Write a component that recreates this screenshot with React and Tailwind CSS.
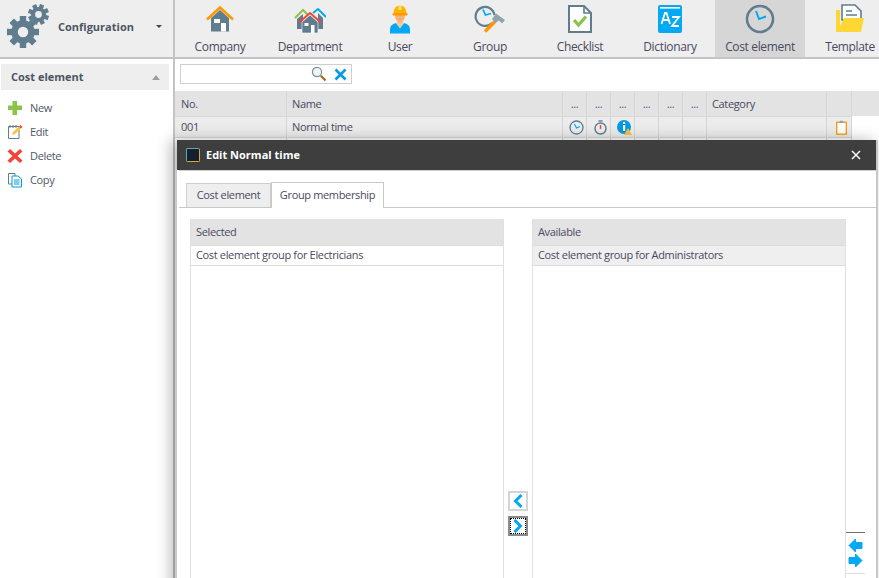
import React from 'react';

const nav = [
  { label: 'Company', icon: <CompanyIcon /> },
  { label: 'Department', icon: <DepartmentIcon /> },
  { label: 'User', icon: <UserIcon /> },
  { label: 'Group', icon: <GroupIcon /> },
  { label: 'Checklist', icon: <ChecklistIcon /> },
  { label: 'Dictionary', icon: <DictionaryIcon /> },
  { label: 'Cost element', icon: <ClockIcon />, active: true },
  { label: 'Template', icon: <TemplateIcon /> },
];

const actions = [
  { label: 'New', icon: <PlusIcon /> },
  { label: 'Edit', icon: <EditIcon /> },
  { label: 'Delete', icon: <DeleteIcon /> },
  { label: 'Copy', icon: <CopyIcon /> },
];

function CompanyIcon() {
  return (
    <svg width="30" height="30" viewBox="0 0 30 30">
      <path d="M6 14 L15 6 L24 14 V27.5 H6 Z" fill="#5f7d8e" />
      <path d="M2 15.5 L15 3.5 L28 15.5" fill="none" stroke="#ff9800" strokeWidth="2.6" />
      <rect x="9" y="15" width="6" height="4" fill="#fff" />
      <rect x="16" y="19" width="5" height="8.5" fill="#fff" />
    </svg>
  );
}

function DepartmentIcon() {
  return (
    <svg width="32" height="30" viewBox="0 0 32 30">
      <path d="M1 14 L9 6 L14 11" fill="none" stroke="#8bc34a" strokeWidth="2" />
      <path d="M19 9 L24 5 L32 13" fill="none" stroke="#03a9f4" strokeWidth="2" />
      <path d="M3 15 L9 10 V25 H3 Z" fill="#5f7d8e" />
      <path d="M24 9 L29 14 V25 H24 Z" fill="#5f7d8e" />
      <path d="M8 18 L16 11 L24 18 V29 H8 Z" fill="#5f7d8e" stroke="#fff" strokeWidth="0.6" />
      <path d="M5 18.5 L16 9 L27 18.5" fill="none" stroke="#f44336" strokeWidth="2" />
      <rect x="10.5" y="19" width="4" height="3" fill="#fff" />
      <rect x="17" y="21" width="3.5" height="8" fill="#fff" />
    </svg>
  );
}

function UserIcon() {
  return (
    <svg width="24" height="30" viewBox="0 0 24 30">
      <path d="M2 29.5 V25 Q2 20.5 8 19 L12 24 L16 19 Q22 20.5 22 25 V29.5 Z" fill="#03a9f4" />
      <path d="M8 19 L12 24.5 L16 19 L14 17 H10 Z" fill="#f2c79b" />
      <path d="M7 11 H17 Q17 17 12 18.5 Q7 17 7 11 Z" fill="#f2b27a" />
      <path d="M5.5 10 Q5.5 1.5 12 1.5 Q18.5 1.5 18.5 10 Z" fill="#ffb300" />
      <rect x="4.5" y="9" width="15" height="2.4" rx="1" fill="#ff9800" />
      <rect x="10.5" y="1" width="3" height="5" fill="#ffe082" />
    </svg>
  );
}

function GroupIcon() {
  return (
    <svg width="32" height="30" viewBox="0 0 32 30">
      <path d="M18 19 A9.5 9.5 0 1 1 20.5 11" fill="none" stroke="#5f7d8e" strokeWidth="2.2" />
      <path d="M9 5.5 L11.5 11 L17 9.5" fill="none" stroke="#03a9f4" strokeWidth="1.8" />
      <path d="M11 27.5 L21 17.5" stroke="#ff9800" strokeWidth="3.6" />
      <path d="M18 15 L22 9.5 L31 16 L28 19.5 L25 16.5 L21.5 19 Z" fill="#90a4ae" />
    </svg>
  );
}

function ChecklistIcon() {
  return (
    <svg width="26" height="30" viewBox="0 0 26 30">
      <path d="M2 2 H17 L24 9 V28 H2 Z" fill="#fff" stroke="#5f7d8e" strokeWidth="2" />
      <path d="M17 2 V9 H24" fill="none" stroke="#5f7d8e" strokeWidth="1.6" />
      <path d="M7 16 L11.5 21 L19 12.5" fill="none" stroke="#8bc34a" strokeWidth="3.2" />
    </svg>
  );
}

function DictionaryIcon() {
  return (
    <svg width="24" height="28" viewBox="0 0 24 28">
      <rect x="0" y="0" width="24" height="28" rx="2" fill="#03a9f4" />
      <rect x="2" y="2" width="20" height="1.6" fill="#fff" />
      <path d="M3.5 19 L7 8 H8.5 L12 19 M5 15 H10.5" fill="none" stroke="#fff" strokeWidth="1.8" />
      <path d="M14 12 H21 L14 21 H21" fill="none" stroke="#fff" strokeWidth="1.8" />
    </svg>
  );
}

function ClockIcon() {
  return (
    <svg width="30" height="30" viewBox="0 0 30 30">
      <circle cx="15" cy="15" r="13" fill="none" stroke="#5f7d8e" strokeWidth="2.6" />
      <path d="M11 7 L14 15 L21 12.5" fill="none" stroke="#03a9f4" strokeWidth="2" />
    </svg>
  );
}

function TemplateIcon() {
  return (
    <svg width="30" height="30" viewBox="0 0 30 30">
      <path d="M1 6 H5 V28 H1 Z" fill="#fdd835" />
      <path d="M7 1 H20 L26 7 V16 H7 Z" fill="#fff" stroke="#5f7d8e" strokeWidth="1.6" />
      <path d="M11 7 H17 M11 11 H22" stroke="#5f7d8e" strokeWidth="1.6" />
      <path d="M9 14 H29 L26 28 H2 Z" fill="#fdd835" />
    </svg>
  );
}

function GearsIcon() {
  const cogA = Array.from({ length: 8 }, (_, i) => i * 45);
  const cogB = Array.from({ length: 8 }, (_, i) => i * 45 + 20);
  return (
    <svg className="-mt-[3px]" width="44" height="46" viewBox="0 0 44 46">
      <g transform="translate(16 28)">
        {cogA.map(a => <rect key={a} x="-3.2" y="-16" width="6.4" height="6" fill="#5f7d8e" transform={`rotate(${a})`} />)}
        <circle r="8.5" fill="none" stroke="#5f7d8e" strokeWidth="6.5" />
      </g>
      <g transform="translate(31.5 10.5)">
        {cogB.map(a => <rect key={a} x="-2.2" y="-10.5" width="4.4" height="4" fill="#5f7d8e" transform={`rotate(${a})`} />)}
        <circle r="5.5" fill="none" stroke="#5f7d8e" strokeWidth="4.2" />
      </g>
    </svg>
  );
}

function PlusIcon() {
  return (
    <svg width="16" height="16" viewBox="0 0 16 16">
      <path d="M5.5 1 H10 V5.5 H15 V10 H10 V15 H5.5 V10 H1 V5.5 H5.5 Z" fill="#8bc34a" />
    </svg>
  );
}

function EditIcon() {
  return (
    <svg width="16" height="16" viewBox="0 0 16 16">
      <path d="M1.5 2.5 H12 V14.5 H1.5 Z" fill="#fff" stroke="#5f7d8e" strokeWidth="1" />
      <path d="M3 1 V4 M6 1 V4 M9 1 V4" stroke="#5f7d8e" strokeWidth="1" />
      <path d="M5 11 L6 8 L12 2.5 L14 4.5 L8 10 Z" fill="#fdc13a" />
      <path d="M12 2.5 L13.5 1 L15.5 3 L14 4.5 Z" fill="#f44336" />
    </svg>
  );
}

function DeleteIcon() {
  return (
    <svg width="16" height="16" viewBox="0 0 16 16">
      <path d="M3 1 L8 5.5 L13 1 L15.5 3.5 L10.5 8 L15.5 12.5 L13 15 L8 10.5 L3 15 L0.5 12.5 L5.5 8 L0.5 3.5 Z" fill="#f44336" />
    </svg>
  );
}

function CopyIcon() {
  return (
    <svg width="16" height="16" viewBox="0 0 16 16">
      <path d="M1.5 1.5 H8 V12 H1.5 Z" fill="#fff" stroke="#5f7d8e" strokeWidth="1" />
      <path d="M5 4 H11 L14.5 7 V15 H5 Z" fill="#fff" stroke="#039be5" strokeWidth="1" />
      <path d="M7 8 H12.5 M7 10 H12.5 M7 12 H12.5" stroke="#039be5" strokeWidth="1" />
    </svg>
  );
}

function SmallClock() {
  return (
    <svg width="15" height="15" viewBox="0 0 15 15">
      <circle cx="7.5" cy="7.5" r="6.5" fill="none" stroke="#5f7d8e" strokeWidth="1.3" />
      <path d="M5.5 4 L7.5 8 L11 6.5" fill="none" stroke="#03a9f4" strokeWidth="1.1" />
    </svg>
  );
}

function Stopwatch() {
  return (
    <svg width="15" height="15" viewBox="0 0 15 15">
      <circle cx="7.5" cy="8.5" r="5.5" fill="none" stroke="#5f7d8e" strokeWidth="1.4" />
      <path d="M5.5 1 H9.5" stroke="#5f7d8e" strokeWidth="1.4" />
      <path d="M7.5 5 V9" stroke="#f44336" strokeWidth="1.4" />
    </svg>
  );
}

function InfoWarn() {
  return (
    <svg width="15" height="15" viewBox="0 0 15 15">
      <circle cx="7" cy="7" r="7" fill="#039be5" />
      <rect x="6" y="2" width="2.2" height="2" fill="#fff" />
      <rect x="6" y="5" width="2.2" height="6" fill="#fff" />
      <path d="M11 8 L15 15 H7 Z" fill="#fdc13a" />
    </svg>
  );
}

function Clipboard() {
  return (
    <svg width="11" height="15" viewBox="0 0 11 15">
      <rect x="0.7" y="2.2" width="9.6" height="12" fill="#fff" stroke="#ff9800" strokeWidth="1.3" />
      <path d="M3 3 L4 0.8 H7 L8 3 Z" fill="#90a4ae" />
    </svg>
  );
}

function ChevronBtn({ dir, focused }) {
  return (
    <button className={`w-5 h-5 flex items-center justify-center bg-white border-2 ${focused ? 'border-[#8a8a8a] outline-1 outline-dotted outline-black -outline-offset-3' : 'border-[#d4d4d4]'}`}>
      <svg width="10" height="14" viewBox="0 0 10 14">
        <path d={dir === 'left' ? 'M8.5 1 L2.5 7 L8.5 13' : 'M1.5 1 L7.5 7 L1.5 13'} fill="none" stroke="#03a9f4" strokeWidth="3" />
      </svg>
    </button>
  );
}

function ListPanel({ title, item, tinted }) {
  return (
    <div className="w-[314px] flex flex-col border-x border-[#e0e0e0] min-h-0 h-full">
      <div className="h-[26px] shrink-0 bg-[#e3e3e3] px-[5px] pb-[2px] flex items-center">{title}</div>
      <div className={`h-[21px] shrink-0 px-[5px] pb-[2px] flex items-center border-y border-[#dcdcdc] ${tinted ? 'bg-[#efefef]' : 'bg-white'}`}>{item}</div>
    </div>
  );
}

function Cell({ className, children }) {
  return <div className={`h-full flex items-center border-r border-[#d6d6d6] ${className}`}>{children}</div>;
}

const dotCols = [0, 1, 2, 3, 4, 5];
const rowIcons = [<SmallClock />, <Stopwatch />, <InfoWarn />, null, null, null];

export default function App() {
  return (
    <div className="w-[879px] h-[578px] overflow-hidden bg-white flex flex-col text-[11px] leading-none tracking-[-0.35px] text-[#4a4a5e] font-['Open_Sans','Noto_Sans',sans-serif]">
      {/* top bar */}
      <div className="h-[59px] shrink-0 flex bg-[#eeeeee] border-b-2 border-[#c4c4c4]">
        <div className="w-[175px] shrink-0 flex items-center border-r-2 border-[#c4c4c4] pl-[7px]">
          <GearsIcon />
          <span className="ml-[7px] pb-[4px] font-bold tracking-normal text-[#4b5563]">Configuration</span>
          <span className="ml-[22px] mb-[4px] w-0 h-0 border-x-[3px] border-x-transparent border-t-[3px] border-t-[#444]" />
        </div>
        <div className="flex-1 flex overflow-hidden">
          {nav.map(n => (
            <div key={n.label} className={`w-[90px] shrink-0 flex flex-col items-center ${n.active ? 'bg-[#d6d6d6]' : ''}`}>
              <div className="h-[36px] mt-[1px] flex items-center justify-center">{n.icon}</div>
              <span className="mt-[4px] text-[12px] whitespace-nowrap">{n.label}</span>
            </div>
          ))}
        </div>
      </div>

      <div className="flex-1 flex min-h-0">
        {/* sidebar */}
        <div className="w-[175px] shrink-0 border-r-2 border-[#c4c4c4] pl-px pr-[4px] pt-[5px]">
          <div className="h-[26px] bg-[#eeeeee] flex items-center justify-between pl-[10px] pr-[9px]">
            <span className="pb-[2px] font-bold tracking-normal text-[#4b5563]">Cost element</span>
            <span className="w-0 h-0 border-x-4 border-x-transparent border-b-[5px] border-b-[#9e9e9e]" />
          </div>
          <div className="mt-[6px] flex flex-col">
            {actions.map(a => (
              <div key={a.label} className="h-6 flex items-center pl-[6px] gap-[7px]">
                {a.icon}
                <span className="pb-[2px] text-[#50566b]">{a.label}</span>
              </div>
            ))}
          </div>
        </div>

        {/* content */}
        <div className="flex-1 relative min-w-0">
          <div className="h-[32px] flex items-start pt-[5px] pl-[5px]">
            <div className="w-[172px] h-[20px] border border-[#cfcfcf] bg-white flex items-center justify-end pr-1 gap-[7px]">
              <svg width="16" height="16" viewBox="0 0 16 16">
                <circle cx="6" cy="6" r="4.6" fill="#eef6fa" stroke="#78909c" strokeWidth="1.2" />
                <path d="M9.8 9.8 L14.5 14.5" stroke="#b0651e" strokeWidth="2.2" />
              </svg>
              <svg width="13" height="13" viewBox="0 0 13 13">
                <path d="M1.5 1.5 L11.5 11.5 M11.5 1.5 L1.5 11.5" stroke="#039be5" strokeWidth="2.6" />
              </svg>
            </div>
          </div>
          <div className="flex flex-col">
            <div className="h-[25px] bg-[#e3e3e3] flex">
              <Cell className="w-[112px] pl-[6px] pb-[1px]">No.</Cell>
              <Cell className="w-[276px] pl-[5px] pb-[1px]">Name</Cell>
              {dotCols.map(i => (
                <Cell key={i} className="w-6 justify-center text-[#7b3f98]">...</Cell>
              ))}
              <Cell className="w-[120px] pl-[5px] pb-[1px]">Category</Cell>
              <Cell className="w-[25px]" />
            </div>
            <div className="h-[22px] flex">
              <div className="flex bg-[#ececec] h-full border-y border-[#d6d6d6]">
                <Cell className="w-[112px] pl-[6px] pb-[2px]">001</Cell>
                <Cell className="w-[276px] pl-[5px] pb-[2px]">Normal time</Cell>
                {dotCols.map(i => (
                  <Cell key={i} className="w-6 justify-center pl-1">{rowIcons[i]}</Cell>
                ))}
                <Cell className="w-[120px]" />
                <Cell className="w-[25px] justify-center pl-1"><Clipboard /></Cell>
              </div>
            </div>
            <div className="h-[3px] flex">
              <Cell className="w-[112px]" />
              <Cell className="w-[276px]" />
              {dotCols.map(i => <Cell key={i} className="w-6" />)}
              <Cell className="w-[120px]" />
              <Cell className="w-[25px]" />
            </div>
          </div>

          {/* edit dialog */}
          <div className="absolute left-[2px] top-[81px] w-[701px] h-[500px] bg-white flex flex-col border-r-2 border-[#c8c8c8] shadow-[-6px_0_14px_rgba(0,0,0,0.28)]">
            <div className="h-[30px] shrink-0 bg-[#3e3e3e] flex items-center pl-[9px] pr-[15px] text-white">
              <span className="w-[14px] h-[14px] rounded-[2px] bg-[#14202c] border border-[#5fa8b8] border-b-[#d8a83a] border-r-[#d8a83a]" />
              <span className="ml-[6px] pb-[2px] font-bold tracking-normal">Edit Normal time</span>
              <svg className="ml-auto" width="10" height="10" viewBox="0 0 10 10">
                <path d="M1 1 L9 9 M9 1 L1 9" stroke="#fff" strokeWidth="1.5" />
              </svg>
            </div>

            <div className="h-[38px] shrink-0 flex items-end pl-[7px] ml-[2px] border-t border-t-[#d0d0d0] border-b border-b-[#c8c8c8]">
              <div className="h-[24px] w-[85px] pb-[2px] flex items-center justify-center bg-[#eeeeee] border border-b-0 border-[#cfcfcf]">Cost element</div>
              <div className="h-[26px] w-[113px] pb-[2px] -mb-px flex items-center justify-center bg-white border border-b-0 border-[#c8c8c8]">Group membership</div>
            </div>

            <div className="flex-1 flex min-h-0 pt-[11px] pl-[13px]">
              <ListPanel title="Selected" item="Cost element group for Electricians" />
              <div className="w-[28px] shrink-0 flex flex-col items-center gap-[5px] pt-[272px]">
                <ChevronBtn dir="left" />
                <ChevronBtn dir="right" focused />
              </div>
              <ListPanel title="Available" item="Cost element group for Administrators" tinted />
              <div className="w-[19px] shrink-0 flex flex-col items-center pt-[313px]">
                <div className="w-full h-[42px] flex flex-col items-center justify-center border-t border-t-[#6e6e6e] border-b border-b-[#e0e0e0]">
                  <svg width="15" height="15" viewBox="0 0 15 15"><path d="M7.5 1 V4.5 H14 V10.5 H7.5 V14 L1 7.5 Z" fill="#03a9f4" stroke="#03a9f4" strokeLinejoin="round" /></svg>
                  <svg width="15" height="15" viewBox="0 0 15 15"><path d="M7.5 1 V4.5 H1 V10.5 H7.5 V14 L14 7.5 Z" fill="#03a9f4" stroke="#03a9f4" strokeLinejoin="round" /></svg>
                </div>
              </div>
            </div>
          </div>
        </div>
      </div>
    </div>
  );
}
